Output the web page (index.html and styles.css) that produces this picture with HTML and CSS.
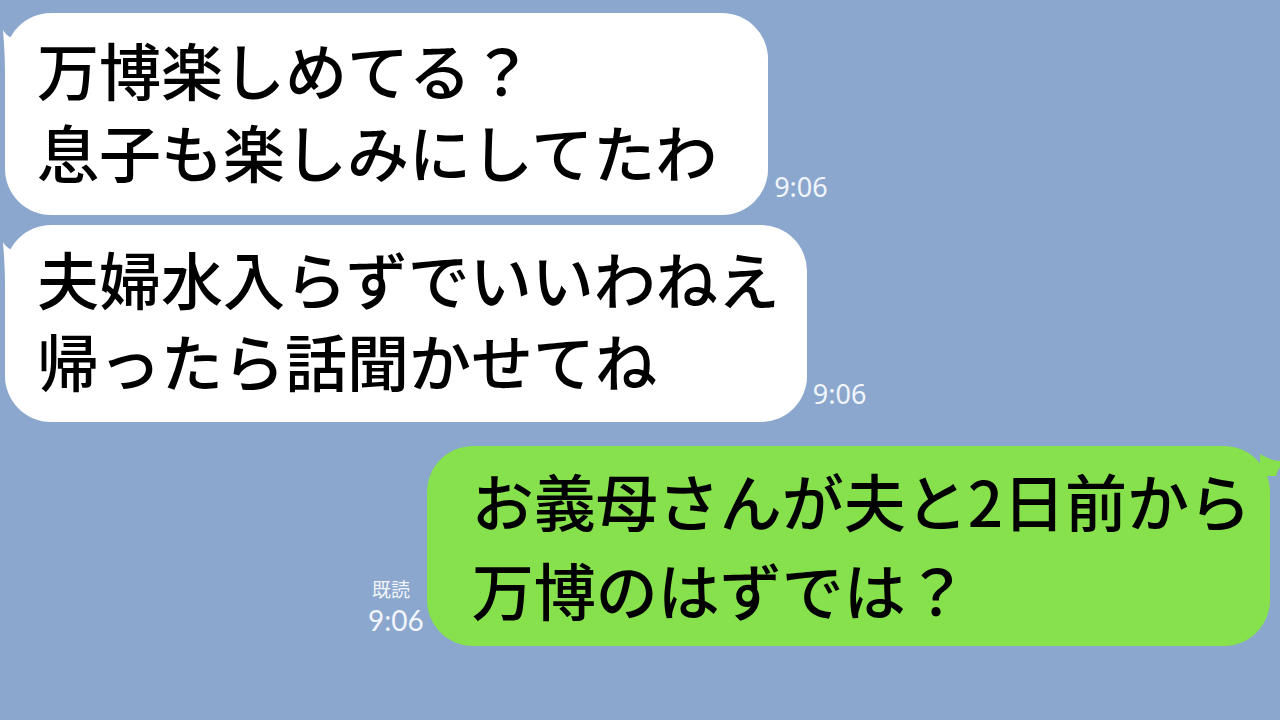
FILE: index.html
```html
<!DOCTYPE html>
<html lang="ja">
<head>
    <meta charset="UTF-8">
    <meta name="viewport" content="width=device-width, initial-scale=1.0">
    <title>トーク</title>
    <link rel="stylesheet" href="styles.css">
</head>
<body>
    <div class="chat">
        <div class="row left">
            <div class="bubble white first">
                <svg class="tail tailLeft" viewBox="0 0 20 44" width="20" height="44">
                    <path d="M1 1 C4 6 8 9 14 10 L20 12 L20 44 L3 44 C3 28 2 14 1 1 Z" fill="#fff"/>
                </svg>
                <p>万博楽しめてる？<br>息子も楽しみにしてたわ</p>
            </div>
            <span class="time">9:06</span>
        </div>
        <div class="row left">
            <div class="bubble white second">
                <svg class="tail tailLeft" viewBox="0 0 20 44" width="20" height="44">
                    <path d="M1 1 C4 6 8 9 14 10 L20 12 L20 44 L3 44 C3 28 2 14 1 1 Z" fill="#fff"/>
                </svg>
                <p>夫婦水入らずでいいわねえ<br>帰ったら話聞かせてね</p>
            </div>
            <span class="time">9:06</span>
        </div>
        <div class="row right">
            <div class="meta">
                <span class="read">既読</span>
                <span class="time">9:06</span>
            </div>
            <div class="bubble green">
                <svg class="tail tailRight" viewBox="0 0 28 24" width="28" height="24">
                    <path d="M0 2 C10 8 18 10 28 9 C22 12 18 16 16 24 L0 24 Z" fill="#86e14c"/>
                </svg>
                <p>お義母さんが夫と2日前から<br>万博のはずでは？</p>
            </div>
        </div>
    </div>
</body>
</html>
```

FILE: styles.css
```css
body {
    margin: 0;
    padding: 0;
    width: 1280px;
    height: 720px;
    overflow: hidden;
    background-color: #8ba7cd;
    font-family: "Noto Sans CJK JP", "Noto Sans", sans-serif;
}

.chat {
    display: flex;
    flex-direction: column;
    gap: 10px;
    padding: 13px 10px 0 5px;
}

.row {
    display: flex;
    align-items: flex-end;
}

.row.right {
    justify-content: flex-end;
    margin-top: 14px;
}

.bubble {
    position: relative;
    border-radius: 46px;
}

.bubble p {
    margin: 0;
    color: #000;
    white-space: nowrap;
    font-weight: 500;
}

.white {
    background: #fff;
}

.white p {
    font-size: 62px;
    line-height: 82px;
}

.first {
    padding: 15px 51px 23px 32px;
}

.second {
    padding: 12px 27px 21px 32px;
}

.green {
    background: #86e14c;
    padding: 10px 19px 12px 45px;
}

.green p {
    font-size: 62px;
    line-height: 89px;
}

.tail {
    position: absolute;
}

.tailLeft {
    left: -3px;
    top: 16px;
}

.tailRight {
    right: -18px;
    top: 6px;
}

.time {
    color: #f1f5fb;
    font-family: "Noto Sans", sans-serif;
    font-size: 27px;
    line-height: 1;
}

.left .time {
    margin-left: 6px;
    margin-bottom: 15px;
}

.meta {
    display: flex;
    flex-direction: column;
    align-items: flex-start;
    margin-right: 3px;
    margin-bottom: 9px;
}

.read {
    color: #f1f5fb;
    font-size: 19px;
    line-height: 28px;
    margin-left: 4px;
}

.meta .time {
    font-family: Lato, "Noto Sans", sans-serif;
    font-size: 28px;
    line-height: 34px;
}
```
